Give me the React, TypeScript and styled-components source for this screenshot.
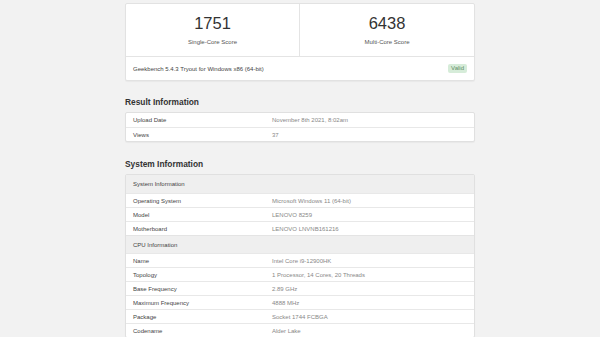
import React from "react";
import styled, { createGlobalStyle } from "styled-components";

const GlobalStyle = createGlobalStyle`
  html, body {
    margin: 0;
    padding: 0;
    background: #f2f2f2;
    font-family: "Liberation Sans", Arial, sans-serif;
  }
`;

const Page = styled.div`
  width: 350px;
  margin: 0 auto;
  padding-top: 3px;
`;

const Card = styled.div`
  background: #fff;
  border: 1px solid #e2e2e2;
  border-radius: 2px;
  box-shadow: 0 1px 1px rgba(0, 0, 0, 0.04);
`;

const ScoreRow = styled.div`
  display: grid;
  grid-template-columns: 1fr 1fr;
  height: 52px;
  border-bottom: 1px solid #e4e4e4;
`;

const ScoreCell = styled.div<{ $divider?: boolean }>`
  display: flex;
  flex-direction: column;
  align-items: center;
  padding-top: 9px;
  border-right: ${(p) => (p.$divider ? "1px solid #e4e4e4" : "none")};
`;

const ScoreValue = styled.div`
  font-size: 16.5px;
  line-height: 20px;
  color: #333;
`;

const ScoreLabel = styled.div`
  font-size: 6px;
  line-height: 8px;
  color: #555;
  margin-top: 5px;
`;

const VersionRow = styled.div`
  display: flex;
  align-items: center;
  justify-content: space-between;
  height: 23px;
  padding: 0 7px 0 7px;
  font-size: 6px;
  color: #444;
`;

const Badge = styled.span`
  background: #d6ecd9;
  color: #5d8c64;
  font-size: 6px;
  line-height: 9px;
  padding: 0 3px;
  border-radius: 2px;
`;

const Heading = styled.h2<{ $top: number }>`
  margin: 0;
  font-size: 8.4px;
  font-weight: 700;
  color: #333;
  line-height: 10px;
  padding-top: ${(p) => p.$top}px;
  padding-bottom: 5px;
`;

const Table = styled.div`
  background: #fff;
  border: 1px solid #e0e0e0;
  border-radius: 2px;
  box-shadow: 0 1px 1px rgba(0, 0, 0, 0.04);
`;

const Row = styled.div`
  display: grid;
  grid-template-columns: 139px 1fr;
  align-items: center;
  height: 14px;
  padding: 0 7px;
  font-size: 6px;
  border-top: 1px solid #e8e8e8;
  box-sizing: border-box;
  &:first-child {
    border-top: none;
  }
`;

const Label = styled.span`
  color: #444;
`;

const Value = styled.span`
  color: #888;
`;

const SectionRow = styled.div`
  display: flex;
  align-items: center;
  height: 18px;
  padding: 0 7px;
  font-size: 6px;
  color: #444;
  background: #efefef;
  border-top: 1px solid #e4e4e4;
  box-sizing: border-box;
  &:first-child {
    border-top: none;
  }
`;

type Item = { label: string; value: string };

const resultInfo: Item[] = [
  { label: "Upload Date", value: "November 8th 2021, 8:02am" },
  { label: "Views", value: "37" },
];

const systemSections: { title: string; rows: Item[] }[] = [
  {
    title: "System Information",
    rows: [
      { label: "Operating System", value: "Microsoft Windows 11 (64-bit)" },
      { label: "Model", value: "LENOVO 8259" },
      { label: "Motherboard", value: "LENOVO LNVNB161216" },
    ],
  },
  {
    title: "CPU Information",
    rows: [
      { label: "Name", value: "Intel Core i9-12900HK" },
      { label: "Topology", value: "1 Processor, 14 Cores, 20 Threads" },
      { label: "Base Frequency", value: "2.89 GHz" },
      { label: "Maximum Frequency", value: "4888 MHz" },
      { label: "Package", value: "Socket 1744 FCBGA" },
      { label: "Codename", value: "Alder Lake" },
    ],
  },
];

const App = () => {
  return (
    <Page>
      <GlobalStyle />
      <Card>
        <ScoreRow>
          <ScoreCell $divider>
            <ScoreValue>1751</ScoreValue>
            <ScoreLabel>Single-Core Score</ScoreLabel>
          </ScoreCell>
          <ScoreCell>
            <ScoreValue>6438</ScoreValue>
            <ScoreLabel>Multi-Core Score</ScoreLabel>
          </ScoreCell>
        </ScoreRow>
        <VersionRow>
          <span>Geekbench 5.4.3 Tryout for Windows x86 (64-bit)</span>
          <Badge>Valid</Badge>
        </VersionRow>
      </Card>

      <Heading $top={16}>Result Information</Heading>
      <Table>
        {resultInfo.map((r) => (
          <Row key={r.label}>
            <Label>{r.label}</Label>
            <Value>{r.value}</Value>
          </Row>
        ))}
      </Table>

      <Heading $top={17}>System Information</Heading>
      <Table>
        {systemSections.map((s) => (
          <React.Fragment key={s.title}>
            <SectionRow>{s.title}</SectionRow>
            {s.rows.map((r) => (
              <Row key={r.label}>
                <Label>{r.label}</Label>
                <Value>{r.value}</Value>
              </Row>
            ))}
          </React.Fragment>
        ))}
      </Table>
    </Page>
  );
};

export default App;
